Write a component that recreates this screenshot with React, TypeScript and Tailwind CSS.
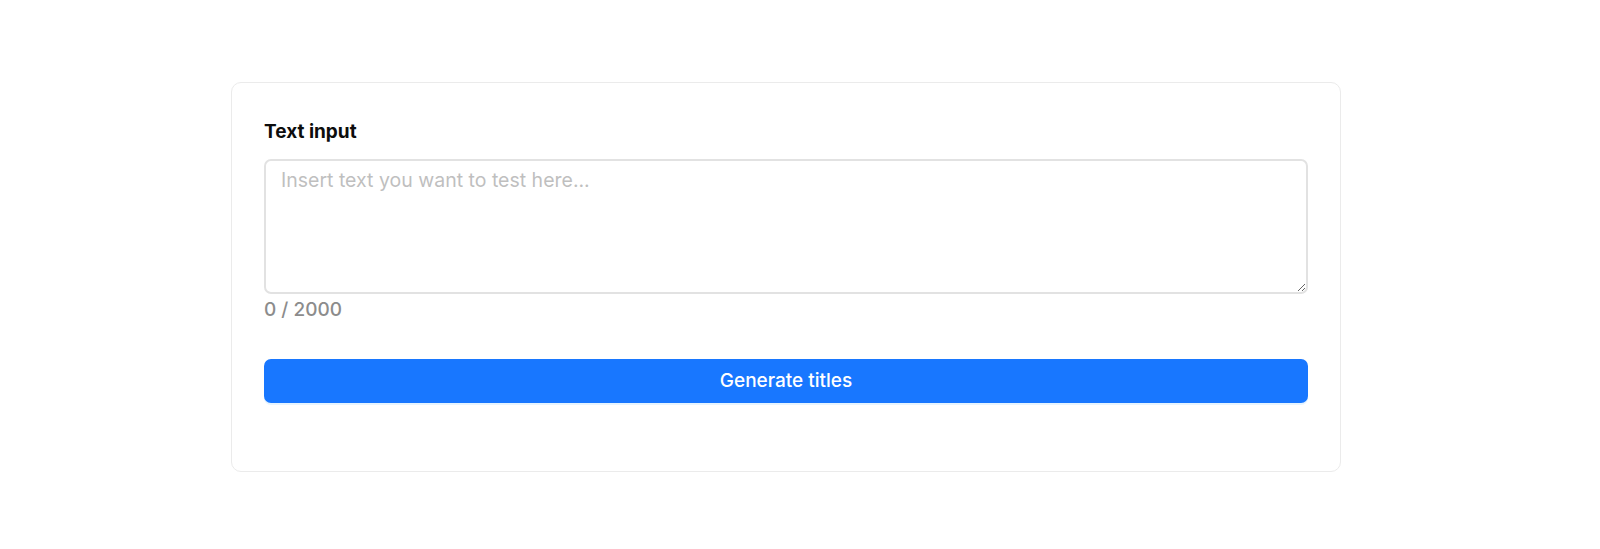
import React from "react";

export default function App() {
  return (
    <div className="min-h-[549px] w-full bg-white pt-[82px] font-['Inter','Noto_Sans',sans-serif]">
      <div className="ml-[231px] w-[1110px] rounded-[10px] border border-[#ebebeb] bg-white px-[32px] pb-[68px] pt-[37px]">
        <label className="block text-[19px] font-bold leading-[24px] text-[#0d0d0d]">
          Text input
        </label>
        <textarea
          placeholder="Insert text you want to test here..."
          className="mt-[15px] block h-[135px] w-full resize-y rounded-[7px] border-2 border-[#e2e2e2] bg-white px-[15px] py-[6px] text-[19.5px] leading-[26px] text-[#1f1f1f] outline-none placeholder:text-[#bfbfbf]"
        />
        <div className="mt-[4px] text-[19px] font-medium leading-[24px] text-[#8c8c8c]">0 / 2000</div>
        <button className="mt-[37px] flex h-[44px] w-full items-center justify-center rounded-[7px] bg-[#1877ff] text-[19px] font-medium text-white shadow-[0_2px_0_rgba(5,145,255,0.1)]">
          Generate titles
        </button>
      </div>
    </div>
  );
}
